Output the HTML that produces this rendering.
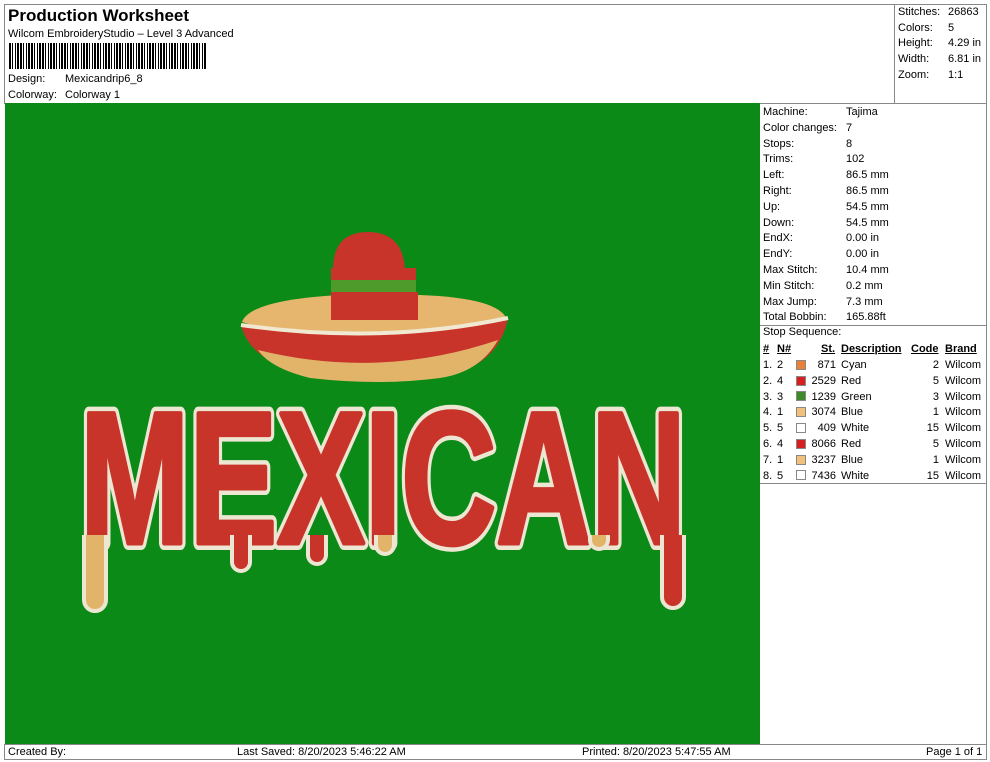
<!DOCTYPE html>
<html><head><meta charset="utf-8"><style>
*{margin:0;padding:0;box-sizing:border-box}
body{width:990px;height:762px;background:#fff;font-family:"Liberation Sans",Arial,sans-serif;font-size:11px;color:#000;position:relative;overflow:hidden}
.abs{position:absolute;white-space:nowrap}
.hdr{left:4px;top:4px;width:983px;height:100px;border:1px solid #888}
.green{left:5px;top:103px;width:755px;height:642px;background:#0c8a18}
.panel{left:760px;top:103px;width:227px;height:642px;border:1px solid #888;border-left:none}
.foot{left:4px;top:744px;width:983px;height:16px;border:1px solid #888;font-size:11px}
.sw{position:absolute;width:10px;height:10px;border:1px solid #888}
.r{text-align:right}
.u{text-decoration:underline;font-weight:bold}
</style></head><body>
<div class="abs hdr"></div>
<div class="abs" style="left:8px;top:6px;font-size:17px;font-weight:bold">Production Worksheet</div>
<div class="abs" style="left:8px;top:28px">Wilcom EmbroideryStudio – Level 3 Advanced</div>
<div class="abs" style="left:9px;top:43px;width:198px;height:26px;background:repeating-linear-gradient(90deg,#000 0 2px,#fff 2px 3px,#000 3px 4px,#fff 4px 6px,#000 6px 7px,#fff 7px 8px,#000 8px 10px,#fff 10px 11px)"></div>
<div class="abs" style="left:8px;top:73px">Design:</div><div class="abs" style="left:65px;top:73px">Mexicandrip6_8</div>
<div class="abs" style="left:8px;top:89px">Colorway:</div><div class="abs" style="left:65px;top:89px">Colorway 1</div>
<div class="abs" style="left:894px;top:4px;width:93px;height:100px;border-left:1px solid #888"></div>
<div class="abs" style="left:898px;top:5px;line-height:15.7px">Stitches:<br>Colors:<br>Height:<br>Width:<br>Zoom:</div>
<div class="abs" style="left:948px;top:5px;line-height:15.7px">26863<br>5<br>4.29 in<br>6.81 in<br>1:1</div>

<div class="abs green"><svg width="755" height="642" viewBox="5 103 755 642" style="display:block">
 <path d="M333 270 Q333 232 368 232 Q403 232 405 270 Z" fill="#c8332a"/>
 <rect x="331" y="268" width="85" height="24" fill="#c8332a"/>
 <rect x="331" y="280" width="85" height="12" fill="#4e9a2a"/>
 <path d="M242 322 Q250 300 340 295 L420 295 Q500 298 507 320 Q470 335 380 335 Q280 335 242 322Z" fill="#e6b66e"/>
 <rect x="331" y="292" width="87" height="28" fill="#c8332a"/>
 <path d="M241 325 Q380 345 508 318 Q500 358 460 372 Q380 388 300 372 Q250 360 241 325Z" fill="#c8332a"/>
 <path d="M241 325 Q380 345 508 318" stroke="#f0e8d0" stroke-width="4" fill="none"/>
 <path d="M258 350 Q380 380 498 340 Q480 372 440 378 Q380 386 310 378 Q270 368 258 350Z" fill="#e2b46a"/>
 <text x="80" y="543" font-family="Liberation Sans" font-weight="bold" font-size="188" textLength="606" lengthAdjust="spacingAndGlyphs" fill="#c8332a" stroke="#ece6d2" stroke-width="14" stroke-linejoin="round" paint-order="stroke">MEXICAN</text>
 <text x="80" y="543" font-family="Liberation Sans" font-weight="bold" font-size="188" textLength="606" lengthAdjust="spacingAndGlyphs" fill="#c8332a" stroke="#c8332a" stroke-width="5" stroke-linejoin="round">MEXICAN</text>
 <g fill="#c8332a" stroke="#ece6d2" stroke-width="4">
  <path d="M84 535 V600 a11 11 0 0 0 22 0 V535" fill="#e2b46a"/>
  <path d="M232 535 V562 a9 9 0 0 0 18 0 V535"/>
  <path d="M308 535 V555 a9 9 0 0 0 18 0 V535"/>
  <path d="M376 535 V545 a9 9 0 0 0 18 0 V535" fill="#e2b46a"/>
  <path d="M590 535 V540 a9 9 0 0 0 18 0 V535" fill="#e2b46a"/>
  <path d="M662 535 V597 a11 11 0 0 0 22 0 V535"/>
 </g>
</svg></div>

<div class="abs panel"></div>
<div class="abs" style="left:763px;top:105px;line-height:15.8px">Machine:<br>Color changes:<br>Stops:<br>Trims:<br>Left:<br>Right:<br>Up:<br>Down:<br>EndX:<br>EndY:<br>Max Stitch:<br>Min Stitch:<br>Max Jump:<br>Total Bobbin:</div>
<div class="abs" style="left:846px;top:105px;line-height:15.8px">Tajima<br>7<br>8<br>102<br>86.5 mm<br>86.5 mm<br>54.5 mm<br>54.5 mm<br>0.00 in<br>0.00 in<br>10.4 mm<br>0.2 mm<br>7.3 mm<br>165.88ft</div>
<div class="abs" style="left:760px;top:325px;width:227px;border-top:1px solid #888"></div>
<div class="abs" style="left:763px;top:326px">Stop Sequence:</div>

<span class="abs u" style="left:763px;top:343px">#</span><span class="abs u" style="left:777px;top:343px">N#</span>
<span class="abs u" style="left:821px;top:343px">St.</span><span class="abs u" style="left:841px;top:343px">Description</span>
<span class="abs u" style="left:911px;top:343px">Code</span><span class="abs u" style="left:945px;top:343px">Brand</span>

<div class="abs" style="left:0;top:358px;width:990px;line-height:15.8px">
 <div class="abs" style="left:763px;top:0">1.<br>2.<br>3.<br>4.<br>5.<br>6.<br>7.<br>8.</div>
 <div class="abs" style="left:777px;top:0">2<br>4<br>3<br>1<br>5<br>4<br>1<br>5</div>
 <div class="abs r" style="left:800px;top:0;width:36px">871<br>2529<br>1239<br>3074<br>409<br>8066<br>3237<br>7436</div>
 <div class="abs" style="left:841px;top:0">Cyan<br>Red<br>Green<br>Blue<br>White<br>Red<br>Blue<br>White</div>
 <div class="abs r" style="left:910px;top:0;width:29px">2<br>5<br>3<br>1<br>15<br>5<br>1<br>15</div>
 <div class="abs" style="left:945px;top:0">Wilcom<br>Wilcom<br>Wilcom<br>Wilcom<br>Wilcom<br>Wilcom<br>Wilcom<br>Wilcom</div>
 <span class="sw" style="left:796px;top:2px;background:#e8803a"></span>
 <span class="sw" style="left:796px;top:18px;background:#d81e1e"></span>
 <span class="sw" style="left:796px;top:33px;background:#3c8a2a"></span>
 <span class="sw" style="left:796px;top:49px;background:#f2c07a"></span>
 <span class="sw" style="left:796px;top:65px;background:#fff"></span>
 <span class="sw" style="left:796px;top:81px;background:#d81e1e"></span>
 <span class="sw" style="left:796px;top:97px;background:#f2c07a"></span>
 <span class="sw" style="left:796px;top:112px;background:#fff"></span>
</div>
<div class="abs" style="left:760px;top:483px;width:227px;border-top:1px solid #888"></div>

<div class="abs foot"></div>
<div class="abs" style="left:8px;top:746px">Created By:</div>
<div class="abs" style="left:237px;top:746px">Last Saved: 8/20/2023 5:46:22 AM</div>
<div class="abs" style="left:582px;top:746px">Printed: 8/20/2023 5:47:55 AM</div>
<div class="abs" style="left:926px;top:746px">Page 1 of 1</div>
</body></html>
